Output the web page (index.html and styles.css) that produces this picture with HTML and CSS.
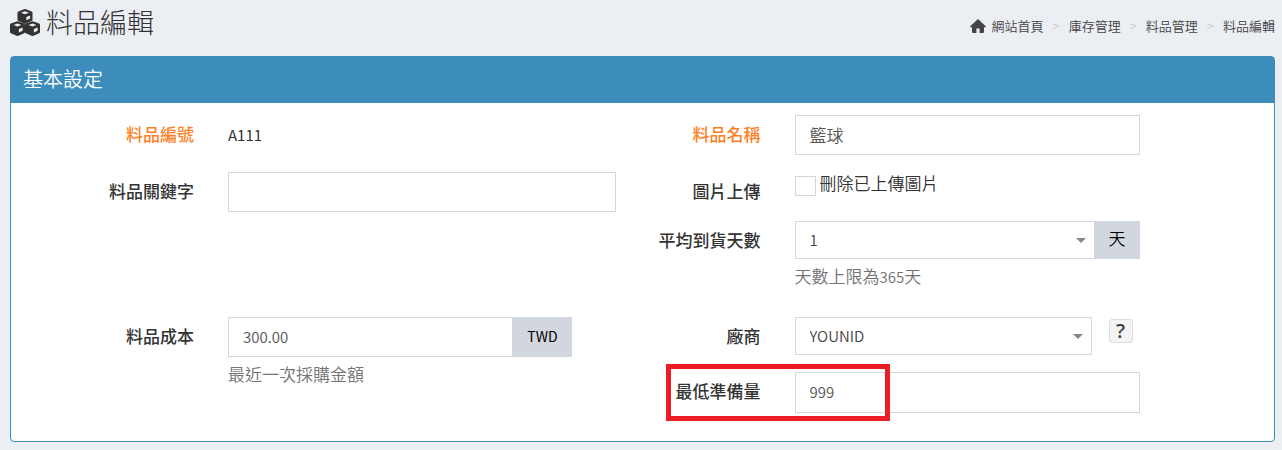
FILE: index.html
```html
<!DOCTYPE html>
<html lang="zh-Hant">
<head>
  <meta charset="UTF-8">
  <title>料品編輯</title>
  <meta name="viewport" content="width=device-width, initial-scale=1.0">
  <link rel="stylesheet" href="styles.css">
</head>
<body>

  <header class="content-header">
    <h1>
      <svg class="icon-cubes" viewBox="0 0 30 27" aria-hidden="true">
        <defs>
          <path id="cube" fill-rule="evenodd" d="M7.500 0q.5 0 1 .2l5.600 2.200q.9.400.9 1.300v7q0 .9-.8 1.300l-5.800 2.500q-.9.400-1.800 0L.8 12Q0 11.600 0 10.700V3.700q0-.9.9-1.300L6.500.2q.5-.2 1-.2zM7.500 2.200L3.500 3.700l4 1.500 4-1.500zM8.900 7.900v3.300l3.700-1.600V6.400z"/>
        </defs>
        <use href="#cube" x="7.500"/>
        <use href="#cube" y="12.200"/>
        <use href="#cube" x="15" y="12.200"/>
      </svg>
      料品編輯
    </h1>
    <nav>
      <ol class="breadcrumb">
        <li><a href="#"><svg class="icon-home" viewBox="0 0 16 14" aria-hidden="true"><path d="M8 0L0 7.400l.6.900H2V13q0 1 1 1h3.400V9.500h3.200V14H13q1 0 1-1V8.300h1.400l.6-.9z"/></svg>網站首頁</a></li>
        <li><a href="#">庫存管理</a></li>
        <li><a href="#">料品管理</a></li>
        <li><a href="#">料品編輯</a></li>
      </ol>
    </nav>
  </header>

  <section class="box">
    <h2 class="box-title">基本設定</h2>
    <form class="box-body">
      <div class="form-group row-1">
        <span class="label required">料品編號</span>
        <output class="static">A111</output>
      </div>
      <div class="form-group right row-1">
        <label class="label required" for="itemName">料品名稱</label>
        <div class="field"><input class="control" type="text" id="itemName" value="籃球"></div>
      </div>

      <div class="form-group tight row-2">
        <label class="label" for="keyword">料品關鍵字</label>
        <div class="field wide"><input class="control" type="text" id="keyword"></div>
      </div>
      <div class="form-group right tight row-2">
        <span class="label">圖片上傳</span>
        <div class="field check">
          <input type="checkbox" id="removeImage">
          <label for="removeImage">刪除已上傳圖片</label>
        </div>
      </div>

      <div class="form-group right row-3">
        <label class="label" for="leadDays">平均到貨天數</label>
        <div class="field">
          <div class="input-group">
            <div class="select"><select id="leadDays"><option>1</option><option>2</option><option>3</option></select></div>
            <span class="addon">天</span>
          </div>
          <p class="help">天數上限為<span class="num">365</span>天</p>
        </div>
      </div>

      <div class="form-group cost">
        <label class="label" for="cost">料品成本</label>
        <div class="field">
          <div class="input-group">
            <input class="control" type="text" id="cost" value="300.00">
            <span class="addon currency">TWD</span>
          </div>
          <p class="help">最近一次採購金額</p>
        </div>
      </div>
      <div class="form-group right row-4">
        <label class="label" for="vendor">廠商</label>
        <div class="field vendor">
          <div class="select"><select id="vendor"><option>YOUNID</option></select></div>
          <button type="button" class="btn-help" aria-label="說明">?</button>
        </div>
      </div>

      <div class="form-group right row-5 highlight">
        <label class="label" for="minStock">最低準備量</label>
        <div class="field"><input class="control" type="text" id="minStock" value="999"></div>
      </div>
    </form>
  </section>

</body>
</html>
```
FILE: styles.css
```css
*,
*::before,
*::after {
  box-sizing: border-box;
}

body {
  margin: 0;
  padding: 0 7px 8px 10px;
  background: #ebeef3;
  color: #333;
  font-family: "Noto Sans CJK TC", "Noto Sans", sans-serif;
  font-size: 17px;
  font-weight: 350;
}

a {
  color: #444;
  text-decoration: none;
}

/* page header */
.content-header {
  display: flex;
  justify-content: space-between;
  height: 56px;
}

h1 {
  display: flex;
  align-items: center;
  gap: 6px;
  height: 44px;
  margin: 0;
  font-size: 27px;
  font-weight: 300;
  line-height: 40px;
}

.icon-cubes {
  width: 30px;
  height: 27px;
  fill: #333;
}

.breadcrumb {
  display: flex;
  height: 50px;
  align-items: center;
  margin: 0;
  padding: 0;
  list-style: none;
  font-size: 13px;
}

.breadcrumb li + li::before {
  content: ">";
  padding: 0 9px;
  color: #ccc;
}

.icon-home {
  width: 16px;
  height: 14px;
  margin-right: 6px;
  vertical-align: -2px;
  fill: #444;
}

/* box */
.box {
  border: 1px solid #3c8dbc;
  border-radius: 4px;
  background: #fff;
}

.box-title {
  height: 46px;
  margin: 0;
  padding: 0 12px;
  background: #3c8dbc;
  color: #fff;
  font-size: 20px;
  font-weight: 350;
  line-height: 44px;
}

.box-body {
  display: grid;
  grid-template-columns: 1fr 1fr;
  padding: 12px 80px 28px 50px;
}

.form-group {
  position: relative;
  display: flex;
  align-items: flex-start;
  gap: 34px;
  margin-bottom: 17px;
}

.form-group.right {
  grid-column: 2;
}

.form-group.tight {
  margin-bottom: 9px;
}

.row-1 { grid-row: 1; }
.row-2 { grid-row: 2; }
.row-3 { grid-row: 3; }
.row-4 { grid-row: 4; }
.row-5 { grid-row: 5; }
.cost { grid-row: 4 / span 2; }

.form-group.cost,
.form-group.row-5 {
  margin-bottom: 0;
}

.label {
  flex: none;
  width: 133px;
  font-weight: 500;
  line-height: 38px;
  text-align: right;
}

.required {
  color: #ff7f27;
}

.static {
  font-size: 15px;
  font-weight: 400;
  line-height: 40px;
}

.field {
  width: 345px;
}

.field.wide {
  width: 388px;
}

.control,
select {
  display: block;
  width: 100%;
  height: 40px;
  padding: 0 14px 2px;
  border: 1px solid #d2d6de;
  border-radius: 0;
  background: #fff;
  color: #555;
  font-family: inherit;
  font-size: 15px;
  font-weight: 350;
}

#itemName {
  font-size: 17px;
}

#minStock {
  height: 41px;
}

.select {
  position: relative;
  flex: 1;
}

select {
  height: 38px;
  appearance: none;
  color: #444;
}

.select::after {
  content: "";
  position: absolute;
  top: 17px;
  right: 9px;
  border: 5px solid transparent;
  border-top-color: #888;
  border-bottom: 0;
  pointer-events: none;
}

.input-group {
  display: flex;
}

.input-group .control {
  flex: 1;
  min-width: 0;
}

.addon {
  width: 45px;
  background: #d2d6de;
  color: #000;
  line-height: 34px;
  text-align: center;
}

.cost .field {
  width: 344px;
}

.currency {
  width: 59px;
  font-size: 14px;
  font-weight: 400;
  line-height: 38px;
}

.help {
  margin: 4px 0 0;
  color: #737373;
  line-height: 26px;
}

.num {
  font-size: 15px;
}

.row-3 .help {
  margin-bottom: 10px;
}

.check {
  display: flex;
  gap: 4px;
  line-height: 22px;
}

.check input {
  width: 21px;
  height: 20px;
  margin: 4px 0 0;
  appearance: none;
  border: 1px solid #d6d6d6;
}

.vendor {
  display: flex;
  gap: 17px;
  padding-right: 7px;
}

.btn-help {
  width: 24px;
  height: 24px;
  margin-top: 2px;
  padding: 0;
  border: 1px solid #ddd;
  border-radius: 3px;
  background: #f4f4f4;
  color: #444;
  font-family: "Open Sans", sans-serif;
  font-size: 20px;
  font-weight: 600;
  line-height: 20px;
}

/* red frame round the minimum stock field */
.highlight::after {
  content: "";
  position: absolute;
  top: -8px;
  left: 38px;
  width: 224px;
  height: 57px;
  border: 5px solid #ed1c24;
  pointer-events: none;
}
```
